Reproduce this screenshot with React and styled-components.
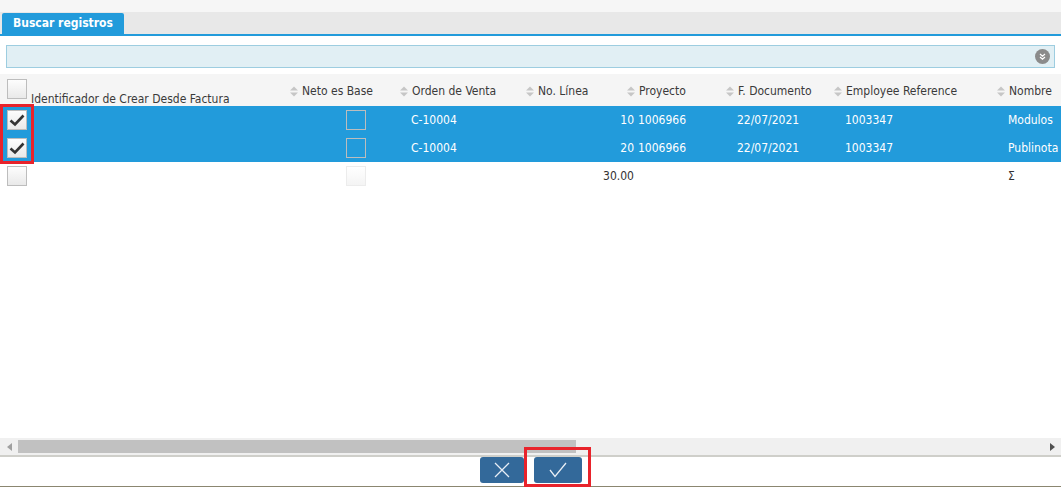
import React from "react";
import styled, { createGlobalStyle } from "styled-components";

const Global = createGlobalStyle`
  html, body { margin: 0; padding: 0; background: #fff; }
  body { font-family: "DejaVu Sans Condensed", "DejaVu Sans", Tahoma, sans-serif; font-size: 12px; color: #333; }
  * { box-sizing: border-box; }
`;

const BLUE = "#229bdb";
const COLS = "286px 110px 126px 101px 99px 108px 163px 1fr";

const Page = styled.div`
  position: relative;
  width: 1061px;
  height: 487px;
  overflow: hidden;
  background: #fff;
  display: flex;
  flex-direction: column;
`;

const TopBand = styled.div`
  height: 12px;
  background: #f6f6f6;
  flex: none;
`;

const TabStrip = styled.div`
  height: 24px;
  flex: none;
  background: #e8e8e8;
  border-bottom: 2px solid ${BLUE};
  display: flex;
  align-items: flex-end;
  padding-left: 2px;
`;

const Tab = styled.div`
  height: 21px;
  line-height: 21px;
  padding: 0 11px;
  background: ${BLUE};
  color: #fff;
  font-weight: bold;
  font-size: 12px;
  border-radius: 2px 2px 0 0;
`;

const FilterBar = styled.div`
  margin: 9px 6px 0 6px;
  height: 23px;
  flex: none;
  border: 1px solid #9dcde0;
  background: #e1eff4;
  display: flex;
  justify-content: flex-end;
  align-items: center;
  padding-right: 4px;
`;

const Grid = styled.div`
  margin-top: 6px;
  height: 364px;
  flex: none;
  display: flex;
  flex-direction: column;
`;

const HeaderRow = styled.div`
  display: grid;
  grid-template-columns: ${COLS};
  height: 32px;
  background: #f5f5f5;
  white-space: nowrap;
`;

const HeadCell = styled.div`
  display: flex;
  align-items: center;
  padding-left: 4px;
  padding-top: 2px;
  color: #3a3a3a;
  gap: 4px;
`;

const FirstHeadCell = styled.div`
  display: flex;
  align-items: flex-end;
  padding: 0 0 0 7px;
  gap: 4px;
  color: #3a3a3a;
  overflow: visible;
`;

const HeadLabel = styled.span`
  line-height: 14px;
`;

const Row = styled.div`
  display: grid;
  grid-template-columns: ${COLS};
  height: 28px;
  background: ${(p) => (p.$selected ? BLUE : "#fff")};
  color: ${(p) => (p.$selected ? "#fff" : "#333")};
  white-space: nowrap;
`;

const Cell = styled.div`
  display: flex;
  align-items: center;
  padding-left: ${(p) => p.$pl ?? 15}px;
  justify-content: ${(p) => (p.$right ? "flex-end" : "flex-start")};
  margin-right: ${(p) => p.$mr ?? 0}px;
`;

const Box = styled.span`
  display: inline-flex;
  align-items: center;
  justify-content: center;
  width: 20px;
  height: 20px;
  flex: none;
  border: 1px solid ${(p) => (p.$variant === "faint" ? "#ececec" : "#bdbdbd")};
  background: ${(p) =>
    p.$variant === "clear"
      ? "transparent"
      : p.$variant === "faint"
      ? "linear-gradient(#ffffff, #f4f4f4)"
      : "linear-gradient(#fdfdfd, #e9e9e9)"};
  margin-bottom: ${(p) => p.$mb ?? 0}px;
`;

const Scrollbar = styled.div`
  height: 19px;
  flex: none;
  background: #f0f0f0;
  border-bottom: 2px solid #cfcfca;
  display: flex;
  align-items: center;
`;

const ArrowBtn = styled.div`
  width: 18px;
  height: 17px;
  display: flex;
  align-items: center;
  justify-content: center;
  flex: none;
`;

const Thumb = styled.div`
  width: 558px;
  height: 13px;
  background: #c1c1c1;
  flex: none;
`;

const Spacer = styled.div`
  flex: 1;
`;

const Footer = styled.div`
  flex: 1;
  display: flex;
  justify-content: center;
  align-items: flex-start;
  gap: 10px;
  border-bottom: 1px solid #8b8670;
`;

const ActionButton = styled.button`
  width: ${(p) => p.$w}px;
  height: 26px;
  border: none;
  border-radius: 3px;
  background: #33699a;
  display: flex;
  align-items: center;
  justify-content: center;
  padding: 0;
  cursor: pointer;
`;

const Highlight = styled.div`
  position: absolute;
  border: 3px solid #e8232b;
  pointer-events: none;
`;

const SortIcon = () => (
  <svg width="8" height="11" viewBox="0 0 8 11">
    <path d="M0 4.5 L4 0.5 L8 4.5 Z" fill="#c6c6c6" />
    <path d="M0 6.5 L4 10.5 L8 6.5 Z" fill="#c6c6c6" />
  </svg>
);

const Tick = () => (
  <svg width="16" height="14" viewBox="0 0 16 14">
    <path d="M1.5 7.5 L6 11.5 L14.5 2.5" stroke="#333" strokeWidth="2.6" fill="none" />
  </svg>
);

const ExpandIcon = () => (
  <svg width="15" height="15" viewBox="0 0 15 15">
    <circle cx="7.5" cy="7.5" r="7.5" fill="#8b8b8b" />
    <path d="M5 5 L7.5 7.2 L10 5 M5 8 L7.5 10.2 L10 8" stroke="#fff" strokeWidth="1.2" fill="none" />
  </svg>
);

const headers = [
  "Neto es Base",
  "Orden de Venta",
  "No. Línea",
  "Proyecto",
  "F. Documento",
  "Employee Reference",
  "Nombre",
];

const rows = [
  { linea: "10", proyecto: "1006966", nombre: "Modulos" },
  { linea: "20", proyecto: "1006966", nombre: "Publinota" },
];

export default function App() {
  return (
    <>
      <Global />
      <Page>
        <TopBand />
        <TabStrip>
          <Tab>Buscar registros</Tab>
        </TabStrip>
        <FilterBar>
          <ExpandIcon />
        </FilterBar>
        <Grid>
          <HeaderRow>
            <FirstHeadCell>
              <Box $mb={7} />
              <HeadLabel>Identificador de Crear Desde Factura</HeadLabel>
            </FirstHeadCell>
            {headers.map((h) => (
              <HeadCell key={h}>
                <SortIcon />
                <span>{h}</span>
              </HeadCell>
            ))}
          </HeaderRow>
          {rows.map((r) => (
            <Row $selected key={r.linea}>
              <Cell $pl={7}>
                <Box>
                  <Tick />
                </Box>
              </Cell>
              <Cell $pl={60}>
                <Box $variant="clear" />
              </Cell>
              <Cell>C-10004</Cell>
              <Cell $right $mr={-11}>{r.linea}</Cell>
              <Cell>{r.proyecto}</Cell>
              <Cell>22/07/2021</Cell>
              <Cell>1003347</Cell>
              <Cell>{r.nombre}</Cell>
            </Row>
          ))}
          <Row>
            <Cell $pl={7}>
              <Box />
            </Cell>
            <Cell $pl={60}>
              <Box $variant="faint" />
            </Cell>
            <Cell />
            <Cell $right $mr={-11}>30.00</Cell>
            <Cell />
            <Cell />
            <Cell />
            <Cell>Σ</Cell>
          </Row>
        </Grid>
        <Scrollbar>
          <ArrowBtn>
            <svg width="5" height="8" viewBox="0 0 5 8">
              <path d="M5 0 L0 4 L5 8 Z" fill="#a0a0a0" />
            </svg>
          </ArrowBtn>
          <Thumb />
          <Spacer />
          <ArrowBtn>
            <svg width="5" height="8" viewBox="0 0 5 8">
              <path d="M0 0 L5 4 L0 8 Z" fill="#505050" />
            </svg>
          </ArrowBtn>
        </Scrollbar>
        <Footer>
          <ActionButton $w={44} aria-label="Cancelar">
            <svg width="16" height="16" viewBox="0 0 16 16">
              <path d="M1 1 L15 15 M15 1 L1 15" stroke="#e8eef5" strokeWidth="1.3" />
            </svg>
          </ActionButton>
          <ActionButton $w={48} aria-label="Aceptar">
            <svg width="18" height="16" viewBox="0 0 18 16">
              <path d="M1 8 L6 14.5 L17 1" stroke="#e8eef5" strokeWidth="1.3" fill="none" />
            </svg>
          </ActionButton>
        </Footer>
        <Highlight style={{ left: 0, top: 104, width: 34, height: 60 }} />
        <Highlight style={{ left: 524, top: 447, width: 67, height: 40 }} />
      </Page>
    </>
  );
}
